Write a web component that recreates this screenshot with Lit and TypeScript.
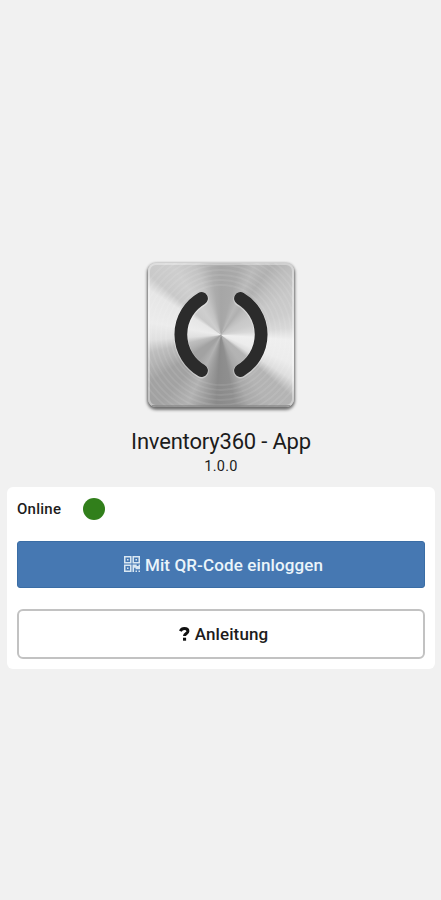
import { LitElement, html, css, svg } from "lit";
import { customElement } from "lit/decorators.js";

const RINGS = [50, 55, 60, 65, 70, 75, 80, 85, 90];

@customElement("app-logo")
class AppLogo extends LitElement {
  static styles = css`
    :host { display: block; width: 146px; height: 144px; }
    .tile {
      width: 100%; height: 100%; box-sizing: border-box; border-radius: 8px; overflow: hidden;
      background: conic-gradient(from 0deg at 50% 50%,
        #a6a6a6 0deg, #a9a9a9 14deg, #b9b9b9 26deg, #b0b0b0 36deg, #bebebe 46deg, #c8c8c8 58deg,
        #cdcdcd 72deg, #d8d8d8 84deg, #efefef 94deg, #ececec 112deg, #dedede 122deg, #b4b4b4 131deg,
        #b3b3b3 145deg, #a8a8a8 158deg, #8f8f8f 169deg, #8a8a8a 184deg, #9c9c9c 194deg,
        #b2b2b2 206deg, #a2a2a2 222deg, #a2a2a2 236deg, #b2b2b2 246deg, #bebebe 256deg, #e0e0e0 266deg,
        #ececec 280deg, #e6e6e6 302deg, #c9c9c9 310deg, #cecece 325deg, #c3c3c3 340deg, #acacac 352deg, #a6a6a6 360deg);
      box-shadow: 0 2px 3px 1px rgba(0, 0, 0, .5), 0 0 3px rgba(0, 0, 0, .2);
    }
    svg { display: block; width: 146px; height: 144px; }
  `;
  render() {
    return html`<div class="tile">
      <svg viewBox="0 0 146 144" fill="none">
        ${RINGS.map((r) => svg`<circle cx="73" cy="72" r=${r} stroke="#fff" stroke-opacity=".09" stroke-width="1.8"/>`)}
        <rect x="1" y="1" width="144" height="142" rx="7" stroke="#fff" stroke-opacity=".35" stroke-width="2"/>
        <path d="M4 143H142" stroke="#555" stroke-opacity=".45" stroke-width="2"/>
        <g stroke-linecap="round">
          <g stroke="#fff" stroke-opacity=".35" stroke-width="14.4">
            <path d="M53.5 36.2A41.7 41.7 0 0 0 53.5 108.2M92.5 36.2A41.7 41.7 0 0 1 92.5 108.2"/>
          </g>
          <g stroke="#2b2b2b" stroke-width="12.8">
            <path d="M53.5 35.5A41.7 41.7 0 0 0 53.5 107.5M92.5 35.5A41.7 41.7 0 0 1 92.5 107.5"/>
          </g>
        </g>
      </svg>
    </div>`;
  }
}

@customElement("app-root")
class AppRoot extends LitElement {
  static styles = css`
    :host {
      display: flex; flex-direction: column; align-items: center; box-sizing: border-box;
      width: 441px; height: 900px; padding: 263px 6px 0 7px;
      background: #f1f1f1; color: #1c1c1c; font-family: Roboto, sans-serif;
    }
    h1 { margin: 21px 0 0; font-size: 22px; line-height: 28px; font-weight: 400; letter-spacing: -.19px; white-space: nowrap; }
    .version { margin-top: 1px; font-size: 14.5px; line-height: 20px; letter-spacing: .3px; }
    .card {
      width: 428px; height: 182px; margin-top: 10px; padding: 0 10px; box-sizing: border-box;
      border-radius: 6px; background: #fff;
    }
    .status { display: flex; align-items: center; height: 43px; gap: 22px; font-size: 15px; font-weight: 500; letter-spacing: .25px; }
    .status span:first-child { padding-top: 1px; }
    .dot { width: 22px; height: 22px; border-radius: 50%; background: #317f1b; }
    button {
      display: flex; align-items: center; justify-content: center; gap: 5px; width: 408px; padding: 0;
      box-sizing: border-box; font: 500 17px Roboto, sans-serif; letter-spacing: .12px;
    }
    .primary { height: 47px; margin-top: 11px; border: 1px solid #3a6da5; border-radius: 3px; background: #4678b2; color: #eaf4fa; }
    .primary svg { margin-top: -2px; opacity: .9; }
    .primary, .secondary { padding-left: 5px; }
    .secondary { height: 50px; margin-top: 21px; border: 2px solid #c2c2c2; border-radius: 6px; background: #fff; color: #1c1c1c; }
    svg { display: block; }
  `;
  render() {
    return html`
      <app-logo></app-logo>
      <h1>Inventory360 - App</h1>
      <div class="version">1.0.0</div>
      <section class="card">
        <div class="status"><span>Online</span><span class="dot"></span></div>
        <button class="primary">
          <svg width="16" height="16" viewBox="0 0 17 17" fill="currentColor">
            <path fill-rule="evenodd" d="M0 0h8v8H0zM1.6 1.6v4.8h4.8V1.6zM9 0h8v8H9zM10.6 1.6v4.8h4.8V1.6zM0 9h8v8H0zM1.6 10.6v4.8h4.8v-4.8z"/>
            <path d="M3.2 3.2h1.6v1.6H3.2zM12.2 3.2h1.6v1.6h-1.6zM3.2 12.2h1.6v1.6H3.2zM9 9h4.5v1.6h2V9H17v5h-4.7v-1.6h-1.6V17H9zM12.2 15.4h1.6V17h-1.6zM15.4 15.4H17V17h-1.6z"/>
          </svg>
          <span>Mit QR-Code einloggen</span>
        </button>
        <button class="secondary">
          <svg width="11" height="14" viewBox="0 0 11 14" fill="none">
            <path d="M1.3 4.2C2.1 2.5 3.4 1.6 5.3 1.6c2 0 3.6 1 3.6 2.6 0 2.2-3.4 2.3-3.4 4.9" stroke="#111" stroke-width="3"/>
            <path d="M4 10.7h3.1v3H4z" fill="#111"/>
          </svg>
          <span>Anleitung</span>
        </button>
      </section>
    `;
  }
}
